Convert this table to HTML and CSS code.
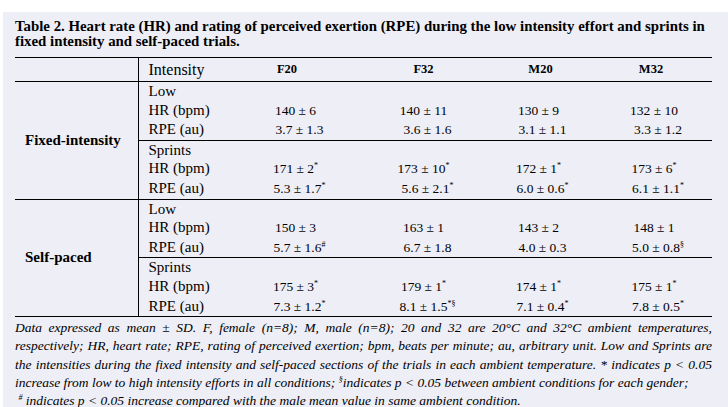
FILE: index.html
```html
<!DOCTYPE html>
<html lang="en">
<head>
<meta charset="utf-8">
<title>Table 2. Heart rate and RPE</title>
<link rel="stylesheet" href="styles.css">
</head>
<body>
<main class="sheet">
  <p class="caption">Table 2. Heart rate (HR) and rating of perceived exertion (RPE) during the low intensity effort and sprints in fixed intensity and self-paced trials.</p>
  <table class="data">
    <colgroup>
      <col class="c-group"><col class="c-int"><col class="c-f20"><col class="c-f32"><col class="c-m20"><col class="c-m32">
    </colgroup>
    <thead>
      <tr>
        <th class="h-group"></th>
        <th class="h-int">Intensity</th>
        <th class="h-val h-f20">F20</th>
        <th class="h-val">F32</th>
        <th class="h-val h-m20">M20</th>
        <th class="h-val h-m32">M32</th>
      </tr>
    </thead>
    <tbody class="section">
      <tr>
        <th class="group" rowspan="6">Fixed-intensity</th>
        <td class="int">Low</td><td></td><td></td><td></td><td></td>
      </tr>
      <tr>
        <td class="int">HR (bpm)</td>
        <td class="val">140 ± 6</td><td class="val">140 ± 11</td><td class="val">130 ± 9</td><td class="val">132 ± 10</td>
      </tr>
      <tr class="rpe">
        <td class="int">RPE (au)</td>
        <td class="val">3.7 ± 1.3</td><td class="val">3.6 ± 1.6</td><td class="val">3.1 ± 1.1</td><td class="val">3.3 ± 1.2</td>
      </tr>
      <tr class="sub-start">
        <td class="int">Sprints</td><td></td><td></td><td></td><td></td>
      </tr>
      <tr>
        <td class="int">HR (bpm)</td>
        <td class="val">171 ± 2<sup class="mk">*</sup></td><td class="val">173 ± 10<sup class="mk">*</sup></td><td class="val">172 ± 1<sup class="mk">*</sup></td><td class="val">173 ± 6<sup class="mk">*</sup></td>
      </tr>
      <tr class="rpe">
        <td class="int">RPE (au)</td>
        <td class="val">5.3 ± 1.7<sup class="mk">*</sup></td><td class="val">5.6 ± 2.1<sup class="mk">*</sup></td><td class="val">6.0 ± 0.6<sup class="mk">*</sup></td><td class="val">6.1 ± 1.1<sup class="mk">*</sup></td>
      </tr>
    </tbody>
    <tbody class="section">
      <tr>
        <th class="group" rowspan="6">Self-paced</th>
        <td class="int">Low</td><td></td><td></td><td></td><td></td>
      </tr>
      <tr>
        <td class="int">HR (bpm)</td>
        <td class="val">150 ± 3</td><td class="val">163 ± 1</td><td class="val">143 ± 2</td><td class="val">148 ± 1</td>
      </tr>
      <tr class="rpe">
        <td class="int">RPE (au)</td>
        <td class="val">5.7 ± 1.6<sup class="mk">#</sup></td><td class="val">6.7 ± 1.8</td><td class="val">4.0 ± 0.3</td><td class="val">5.0 ± 0.8<sup class="mk">§</sup></td>
      </tr>
      <tr class="sub-start">
        <td class="int">Sprints</td><td></td><td></td><td></td><td></td>
      </tr>
      <tr>
        <td class="int">HR (bpm)</td>
        <td class="val">175 ± 3<sup class="mk">*</sup></td><td class="val">179 ± 1<sup class="mk">*</sup></td><td class="val">174 ± 1<sup class="mk">*</sup></td><td class="val">175 ± 1<sup class="mk">*</sup></td>
      </tr>
      <tr class="rpe">
        <td class="int">RPE (au)</td>
        <td class="val">7.3 ± 1.2<sup class="mk">*</sup></td><td class="val">8.1 ± 1.5<sup class="mk">*§</sup></td><td class="val">7.1 ± 0.4<sup class="mk">*</sup></td><td class="val">7.8 ± 0.5<sup class="mk">*</sup></td>
      </tr>
    </tbody>
  </table>
  <div class="note">
    <p class="note-main">
      <span class="jl">Data expressed as mean ± SD. F, female (n=8); M, male (n=8); 20 and 32 are 20°C and 32°C ambient temperatures,</span>
      <span class="jl">respectively; HR, heart rate; RPE, rating of perceived exertion; bpm, beats per minute; au, arbitrary unit. Low and Sprints are</span>
      <span class="jl">the intensities during the fixed intensity and self-paced sections of the trials in each ambient temperature. * indicates p &lt; 0.05</span>
      <span class="jl jl-end">increase from low to high intensity efforts in all conditions; <sup class="mk">§</sup>indicates p &lt; 0.05 between ambient conditions for each gender;</span>
    </p>
    <p class="note-extra">&nbsp;<sup class="mk">#</sup> indicates p &lt; 0.05 increase compared with the male mean value in same ambient condition.</p>
  </div>
</main>
</body>
</html>
```

FILE: styles.css
```css
* {
  box-sizing: border-box;
}

html,
body {
  margin: 0;
  padding: 0;
  background: #ffffff;
}

body {
  font-family: "Liberation Serif", "Times New Roman", serif;
  color: #000000;
}

.sheet {
  display: block;
  margin: 12px 0 0 3px;
  height: 395px;
  background: #eeeef6;
  padding: 7px 16px 0 12px;
}

.caption {
  margin: 0;
  font-weight: bold;
  font-size: 14.85px;
  line-height: 14.5px;
}

.data {
  margin-top: 9px;
  width: 697px;
  table-layout: fixed;
  border-collapse: collapse;
  border-top: 1px solid #000;
  border-bottom: 1px solid #000;
}

.c-group { width: 123px; }
.c-int { width: 87px; }
.c-f20 { width: 141px; }
.c-f32 { width: 115px; }
.c-m20 { width: 115px; }
.c-m32 { width: 116px; }

.data thead tr {
  border-bottom: 1px solid #000;
}

.data thead th {
  height: 24px;
  padding: 0;
  vertical-align: middle;
}

.h-group {
  border-right: 1px solid #000;
}

.h-int {
  font-weight: normal;
  font-size: 16px;
  text-align: left;
  padding-left: 10px !important;
}

.h-val {
  font-weight: bold;
  font-size: 12.5px;
  text-align: center;
}

.h-f20 {
  padding-right: 17px !important;
}

.h-m20 {
  padding-left: 4px !important;
}

.h-m32 {
  padding-right: 6px !important;
}

.section + .section {
  border-top: 1px solid #000;
}

.data td {
  padding: 0;
  height: 18.6px;
  line-height: 18.6px;
  vertical-align: baseline;
}

.group {
  border-right: 1px solid #000;
  text-align: left;
  vertical-align: middle;
  padding: 0 0 0 10px;
  font-size: 15px;
  font-weight: bold;
}

.int {
  font-size: 15px;
  padding-left: 10px !important;
  white-space: nowrap;
}

.val {
  font-size: 13.5px;
  text-align: center;
  white-space: nowrap;
}

.rpe .val {
  padding-left: 8px !important;
}

.sub-start td {
  border-top: 1px solid #000;
}

.mk {
  font-size: 8px;
  line-height: 0;
  vertical-align: 5px;
}

.note {
  margin-top: 2px;
  font-style: italic;
  font-size: 13.5px;
  line-height: 18.2px;
}

.note p {
  margin: 0;
}

.jl {
  display: block;
  text-align: justify;
  text-align-last: justify;
}

.jl-end {
  text-align-last: left;
}
```
